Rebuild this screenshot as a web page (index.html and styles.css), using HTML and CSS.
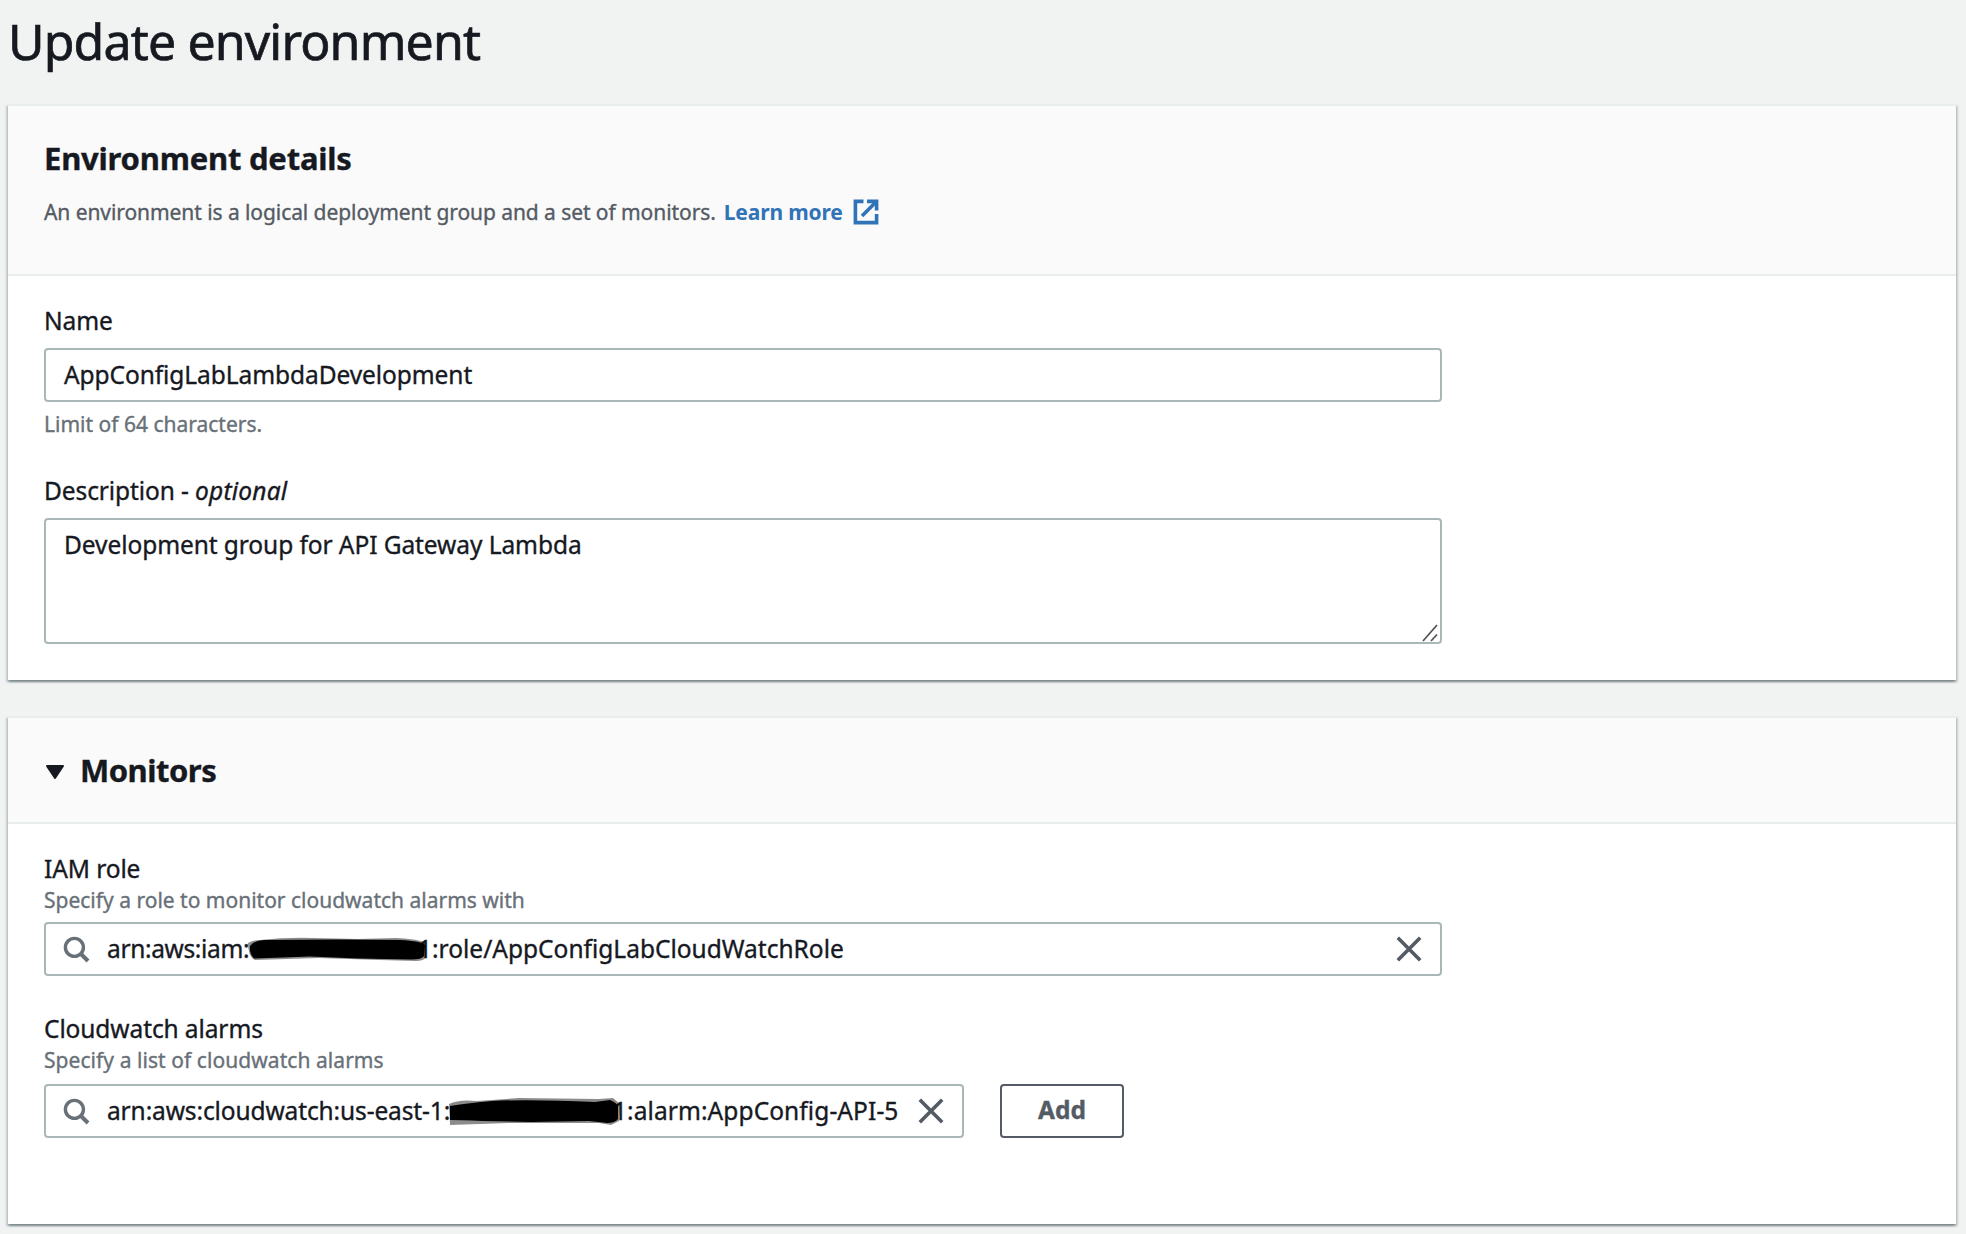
FILE: index.html
```html
<!DOCTYPE html>
<html lang="en">
<head>
<meta charset="utf-8">
<title>Update environment</title>
<link rel="stylesheet" href="styles.css">
</head>
<body>
<main class="page">
  <h1 class="page-title">Update environment</h1>

  <section class="card">
    <header class="card-header card-header-tall">
      <h2 class="card-title">Environment details</h2>
      <p class="card-description">
        <span>An environment is a logical deployment group and a set of monitors.</span>
        <a class="link" href="#">Learn more
          <svg class="icon-external" viewBox="0 0 26 26" width="26" height="26" fill="none" stroke="currentColor" stroke-width="3.6">
            <path d="M10.5 2.4H2.4V23.6H23.6V15"/>
            <path d="M14 2.4H23.6V11.5M23.2 2.8L9 17" />
          </svg></a>
      </p>
    </header>
    <div class="card-body">
      <label class="label">Name</label>
      <div class="input"><span class="value">AppConfigLabLambdaDevelopment</span></div>
      <p class="hint">Limit of 64 characters.</p>
      <label class="label label-next">Description - <i class="optional">optional</i></label>
      <div class="input textarea">
        <span class="value">Development group for API Gateway Lambda</span>
        <svg class="grip" viewBox="0 0 16 18" width="16" height="18" stroke="#555" stroke-width="1.8"><path d="M1 17L15 1M9 17L15 10.5"/></svg>
      </div>
    </div>
  </section>

  <section class="card">
    <header class="card-header">
      <h2 class="card-title card-title-toggle">
        <svg class="caret" viewBox="0 0 20 15" width="20" height="15"><path d="M2 1H18L10 13Z" fill="currentColor" stroke="currentColor" stroke-width="2" stroke-linejoin="round"/></svg>
        Monitors
      </h2>
    </header>
    <div class="card-body card-body-monitors">
      <label class="label">IAM role</label>
      <p class="sub">Specify a role to monitor cloudwatch alarms with</p>
      <div class="input search">
        <svg class="icon-search" viewBox="0 0 27 27" width="27" height="27" fill="none" stroke="currentColor" stroke-width="3.4"><circle cx="11.4" cy="11.4" r="9"/><path d="M17.5 17.5L25 25" stroke-width="4"/></svg>
        <span class="value arn">arn:aws:iam:</span>
        <svg class="redaction" viewBox="0 0 180 28" width="180" height="28">
          <path d="M0 8Q5 5 12 5Q40 2 65 3L110 4L148 3Q171 4 178 8L178 22Q176 26 168 26L132 25L70 23L7 25Q0 22 0 8Z" fill="#000" opacity=".45"/>
          <path d="M2 11Q8 4 20 5L90 4.5L152 5Q174 6 177 10L176 21Q174 24.5 163 24.5L110 23.5L62 21.5L6 23.5Q1 19 2 11Z" fill="#000"/>
        </svg>
        <span class="value tail wide">1:role/AppConfigLabCloudWatchRole</span>
        <svg class="icon-close" viewBox="0 0 26 26" width="26" height="26" stroke="currentColor" stroke-width="3.6"><path d="M1.8 1.8L24.2 24.2M24.2 1.8L1.8 24.2"/></svg>
      </div>

      <label class="label label-alarms">Cloudwatch alarms</label>
      <p class="sub sub-alarms">Specify a list of cloudwatch alarms</p>
      <div class="row">
        <div class="input search search-short">
          <svg class="icon-search" viewBox="0 0 27 27" width="27" height="27" fill="none" stroke="currentColor" stroke-width="3.4"><circle cx="11.4" cy="11.4" r="9"/><path d="M17.5 17.5L25 25" stroke-width="4"/></svg>
          <span class="value arn-long">arn:aws:cloudwatch:us-east-1:</span>
          <svg class="redaction redaction-alarm" viewBox="0 0 176 28" width="176" height="28">
            <path d="M0 7Q10 2 28 4L70 1L150 2L164 1L171 7L170 24L162 28L150 26L60 26L1 28Z" fill="#000" opacity=".45"/>
            <path d="M1 9Q20 6 43 4Q80 2 146 5L161 3Q170 7 169 11L169 22Q166 26 158 26L140 24L82 25L34 24Q10 23 1 23Z" fill="#000"/>
          </svg>
          <span class="value tail tail-alarm">1:alarm:AppConfig-API-5</span>
          <svg class="icon-close" viewBox="0 0 26 26" width="26" height="26" stroke="currentColor" stroke-width="3.6"><path d="M1.8 1.8L24.2 24.2M24.2 1.8L1.8 24.2"/></svg>
        </div>
        <button class="button" type="button">Add</button>
      </div>
    </div>
  </section>
</main>
</body>
</html>
```
FILE: styles.css
```css
* { box-sizing: border-box; }
body {
  margin: 0;
  background: #f1f3f3;
  color: #16191f;
  font-family: "Noto Sans", "Open Sans", sans-serif;
  font-size: 24.5px;
  -webkit-text-stroke: 0.35px currentColor;
}
h1, h2, p { margin: 0; }
svg { display: block; flex: none; }
.page { padding: 9px 10px 10px 8px; }
.page-title {
  margin: 0 0 31px;
  font-size: 50px;
  font-weight: 400;
  line-height: 64px;
  letter-spacing: -0.85px;
  -webkit-text-stroke-width: 0.7px;
}
.card {
  margin-bottom: 36px;
  border-top: 2px solid #eaeded;
  background: #fff;
  box-shadow: 0 2px 2px rgba(0, 28, 36, .3), 2px 2px 2px rgba(0, 28, 36, .15), -2px 2px 2px rgba(0, 28, 36, .15);
}
.card:last-child { margin-bottom: 0; }
.card-header {
  padding: 32px 36px;
  border-bottom: 2px solid #eaeded;
  background: #fafafa;
}
.card-header-tall { padding-bottom: 46px; }
.card-title {
  display: flex;
  align-items: center;
  font-size: 31px;
  font-weight: 700;
  line-height: 40px;
  letter-spacing: -0.22px;
}
.card-title-toggle { letter-spacing: -0.5px; }
.caret { margin: 4px 15px 0 1px; }
.card-description {
  display: flex;
  gap: 8px;
  margin-top: 18px;
  color: #545b64;
  font-size: 21px;
  line-height: 32px;
  letter-spacing: -0.07px;
}
.link {
  display: flex;
  align-items: center;
  gap: 10px;
  color: #3173b7;
  font-weight: 700;
  text-decoration: none;
  letter-spacing: -0.15px;
  -webkit-text-stroke-width: 0;
}
.card-body { padding: 25px 36px 36px; }
.card-body-monitors { padding-bottom: 86px; }
.label { display: block; line-height: 40px; letter-spacing: -0.1px; }
.optional { letter-spacing: 0.2px; }
.label-next { margin-top: 31px; }
.label-alarms { margin-top: 33px; }
.input {
  display: flex;
  align-items: center;
  width: 1398px;
  height: 54px;
  margin-top: 7px;
  padding: 0 18px;
  border: 2px solid #aab7b8;
  border-radius: 4px;
  background: #fff;
}
.value { line-height: 40px; white-space: pre; letter-spacing: -0.08px; }
.wide { letter-spacing: 0; }
.textarea {
  align-items: flex-start;
  justify-content: space-between;
  height: 126px;
  padding: 5px 2px 0 18px;
}
.grip { align-self: flex-end; }
.hint, .sub { color: #687078; font-size: 21px; }
.hint { margin-top: 6px; line-height: 32px; }
.sub { margin-top: -1px; line-height: 24px; }
.sub-alarms { letter-spacing: 0.06px; }
.search { margin-top: 10px; padding: 0 18px 0 17px; }
.icon-search { margin-right: 17px; color: #687078; }
.arn { width: 141px; letter-spacing: -0.35px; }
.arn-long { width: 342px; letter-spacing: -0.12px; }
.redaction { position: relative; z-index: 1; margin-right: -10px; }
.redaction-alarm { margin-right: -12px; }
.tail-alarm { letter-spacing: 0.08px; }
.icon-close { margin-left: auto; color: #545b64; }
.row { display: flex; gap: 36px; margin-top: 12px; }
.search-short { width: 920px; margin-top: 0; }
.button {
  width: 124px;
  height: 54px;
  padding: 0 0 4px;
  border: 2px solid #545b64;
  border-radius: 4px;
  background: #fff;
  color: #545b64;
  font: 700 24.5px "Noto Sans", sans-serif;
}
```
